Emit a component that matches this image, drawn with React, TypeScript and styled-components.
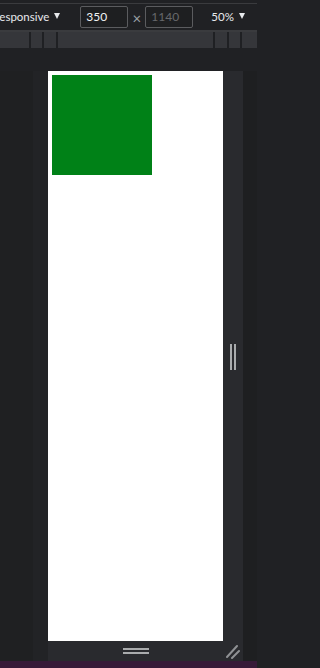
import styled, { createGlobalStyle } from 'styled-components'

const GlobalStyle = createGlobalStyle`
  html, body {
    margin: 0;
    padding: 0;
    background: #202124;
    overflow: hidden;
  }
`

const Shell = styled.div`
  display: flex;
  flex-direction: column;
  width: 257px;
  height: 668px;
  background: #202124;
  overflow: hidden;
  font-family: Lato, 'Noto Sans', sans-serif;
`

const Toolbar = styled.div`
  display: flex;
  align-items: center;
  height: 25px;
  margin-top: 3px;
  border-top: 1px solid #3a3b3e;
  border-bottom: 2px solid #3a3b3e;
  padding-bottom: 1px;
  color: #e8eaed;
  font-size: 11.5px;
  white-space: nowrap;
  overflow: hidden;
`

const Dropdown = styled.div<{ $offset?: number }>`
  display: flex;
  align-items: center;
  gap: 5px;
  flex: none;
  margin-left: ${({ $offset = 0 }) => $offset}px;
`

const Caret = styled.span`
  width: 0;
  height: 0;
  border-left: 3px solid transparent;
  border-right: 3px solid transparent;
  border-top: 6px solid #e8eaed;
  margin-top: -1px;
`

const SizeInput = styled.div<{ $disabled?: boolean; $gap?: number }>`
  box-sizing: border-box;
  width: 48px;
  height: 22px;
  flex: none;
  display: flex;
  align-items: center;
  padding-left: 5px;
  margin-left: ${({ $gap = 0 }) => $gap}px;
  border: 1px solid #5b5c5f;
  border-radius: 2px;
  background: #1e1f21;
  color: ${({ $disabled }) => ($disabled ? '#66686b' : '#f1f3f4')};
  font-size: 12px;
`

const Times = styled.span`
  width: 17px;
  flex: none;
  text-align: center;
  color: #9aa0a6;
  font-size: 15px;
  margin-top: 3px;
`

const Ruler = styled.div`
  display: grid;
  grid-template-columns: 29px 11px 12px 155px 12px 11px 1fr;
  gap: 2px;
  height: 16px;
  background: #1f2023;
`

const RulerSegment = styled.div`
  background: #35363a;
`

const Stage = styled.div`
  display: flex;
  flex: 1;
  padding-top: 23px;
`

const Gutter = styled.div`
  display: flex;
  flex: none;
  width: 48px;
`

const GutterBand = styled.div<{ $width: number; $tone: string }>`
  width: ${({ $width }) => $width}px;
  background: ${({ $tone }) => $tone};
`

const Device = styled.div`
  display: grid;
  grid-template-columns: 175px 20px;
  grid-template-rows: 570px 20px;
  flex: none;
`

const Page = styled.div`
  background: #ffffff;
  padding: 4px;
  box-sizing: border-box;
`

const GreenBox = styled.div`
  width: 100px;
  height: 100px;
  background: #008117;
`

const SideHandle = styled.div<{ $vertical?: boolean }>`
  display: flex;
  flex-direction: ${({ $vertical }) => ($vertical ? 'row' : 'column')};
  align-items: center;
  justify-content: center;
  gap: 2px;
  background: #292a2e;
`

const Grip = styled.span<{ $vertical?: boolean }>`
  display: block;
  background: #a9abad;
  width: ${({ $vertical }) => ($vertical ? '2px' : '26px')};
  height: ${({ $vertical }) => ($vertical ? '26px' : '2px')};
  margin-top: ${({ $vertical }) => ($vertical ? '1px' : '0')};
`

const Corner = styled.div`
  background: #292a2e;
  display: flex;
  align-items: flex-end;
  justify-content: flex-end;
  padding: 0 3px 2px 0;
  box-sizing: border-box;
`

const RightFill = styled.div`
  flex: 1;
  background: #1e1f21;
`

const StatusStrip = styled.div`
  height: 7px;
  flex: none;
  background: #371a38;
`

const rulerSegments = Array.from({ length: 7 }, (_, i) => i)

export default function App() {
  return (
    <>
      <GlobalStyle />
      <Shell>
        <Toolbar>
          <Dropdown $offset={-7.5}>
            Responsive
            <Caret />
          </Dropdown>
          <SizeInput $gap={20}>350</SizeInput>
          <Times>×</Times>
          <SizeInput $disabled>1140</SizeInput>
          <Dropdown $offset={18}>
            50%
            <Caret />
          </Dropdown>
        </Toolbar>

        <Ruler>
          {rulerSegments.map(i => (
            <RulerSegment key={i} />
          ))}
        </Ruler>

        <Stage>
          <Gutter>
            <GutterBand $width={33} $tone="#1f2022" />
            <GutterBand $width={15} $tone="#222326" />
          </Gutter>

          <Device>
            <Page>
              <GreenBox />
            </Page>
            <SideHandle $vertical>
              <Grip $vertical />
              <Grip $vertical />
            </SideHandle>
            <SideHandle>
              <Grip />
              <Grip />
            </SideHandle>
            <Corner>
              <svg width="14" height="15" viewBox="0 0 14 15">
                <path d="M1 13 L11 2 M6 14 L13 7" stroke="#8f9194" strokeWidth="2" strokeLinecap="round" fill="none" />
              </svg>
            </Corner>
          </Device>

          <RightFill />
        </Stage>

        <StatusStrip />
      </Shell>
    </>
  )
}
